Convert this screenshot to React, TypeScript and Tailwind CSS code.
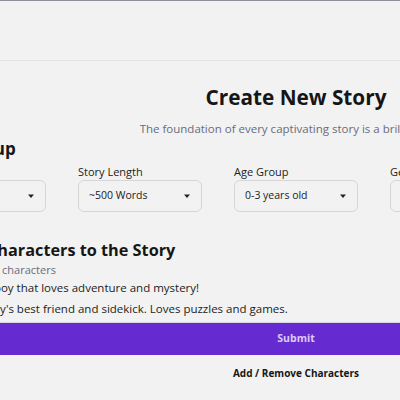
import React from "react";

const Caret = () => (
  <svg width="8" height="5" viewBox="0 0 8 5" className="shrink-0">
    <path d="M1 0.5 L7 0.5 L4 4 Z" fill="#222" />
  </svg>
);

const Select = ({ label, value }: { label: string; value: string }) => (
  <div className="flex w-[124px] shrink-0 flex-col">
    <div className="h-[16px] text-[11px] leading-[16px] text-[#222]">{label}</div>
    <div className="flex h-[32px] items-center justify-between rounded-[6px] border border-[#d6d6da] pl-[10px] pr-[10px] text-[10.5px] text-[#222]">
      <span>{value}</span>
      <Caret />
    </div>
  </div>
);

export default function App() {
  return (
    <div
      className="h-[400px] w-[400px] overflow-hidden bg-[#f2f2f2]"
      style={{ fontFamily: "'Open Sans', 'Liberation Sans', sans-serif" }}
    >
      <div className="h-[61px] border-t border-b border-t-[#8e8e98] border-b-[#e2e2e2]" />
      <div className="-ml-[78px] w-[748px]">
        <div className="pt-[22px] text-center text-[20.75px] font-bold leading-[28px] text-[#161616]">
          Create New Story
        </div>
        <div className="mt-[10px] text-center text-[11.5px] leading-[16px] text-[#6b6b7b]">
          The foundation of every captivating story is a brilliant idea.
        </div>
        <div className="-ml-[4px] text-[17px] font-bold leading-[24px] text-[#161616]">
          Story Setup
        </div>
        <div className="mt-[3px] flex gap-[32px]">
          <Select label="Story Type" value="Adventure" />
          <Select label="Story Length" value="~500 Words" />
          <Select label="Age Group" value="0-3 years old" />
          <Select label="Genre" value="Fantasy" />
          <Select label="Language" value="English" />
        </div>
        <div className="mt-[26px] ml-[29px] text-[16.25px] font-bold leading-[24px] text-[#161616]">
          Add Characters to the Story
        </div>
      </div>
      <div className="-ml-[70px] whitespace-nowrap text-[11px] leading-[16px] text-[#6b6b7b]">
        Select up to 3 characters
      </div>
      <div className="-ml-[96px] mt-[1px] whitespace-nowrap text-[11.5px] leading-[18px] text-[#1c1c1c]">
        Tommy: A brave boy that loves adventure and mystery!
      </div>
      <div className="-ml-[58px] mt-[3px] whitespace-nowrap text-[11.5px] leading-[18px] text-[#1c1c1c]">
        Lily: Tommy's best friend and sidekick. Loves puzzles and games.
      </div>
      <div className="-ml-[78px] mt-[4px] w-[748px] border-t border-[#d9d4e6]">
        <div className="flex h-[32px] items-center justify-center bg-[#662bd0]">
          <span className="text-[10.5px] font-bold text-[#dccbf7]">Submit</span>
        </div>
        <div className="mt-[10px] text-center text-[10px] font-bold leading-[16px] text-[#161616]">
          Add / Remove Characters
        </div>
      </div>
    </div>
  );
}
